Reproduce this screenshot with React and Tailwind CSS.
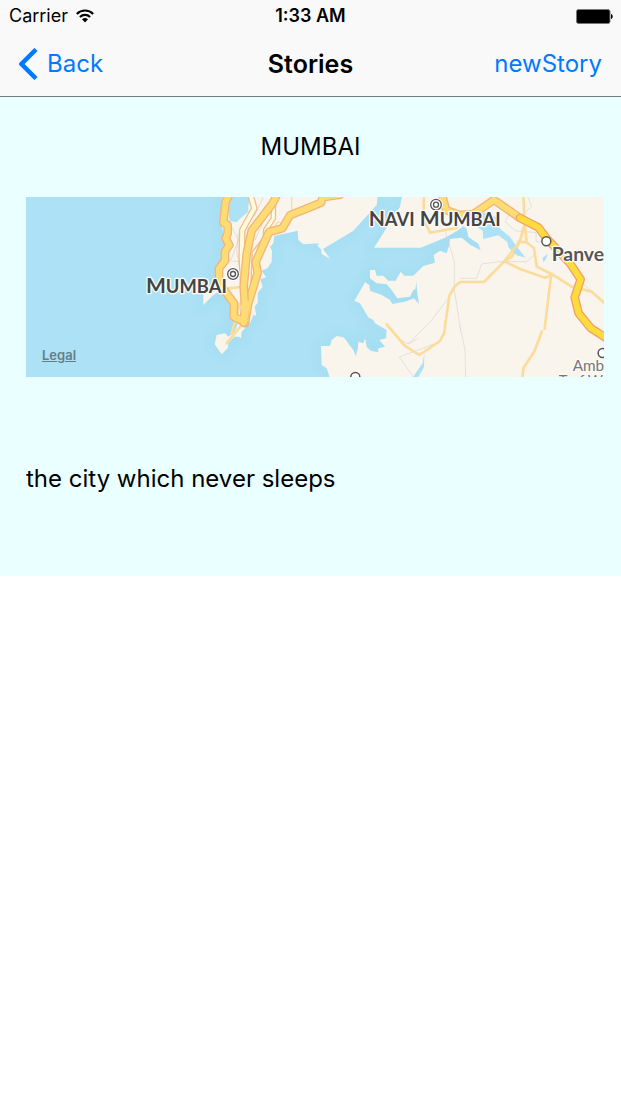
import React from "react";

const WATER = "#ade1f5";
const LAND = "#f9f5ed";

function Road({ d, width, fill, edge }) {
  return (
    <g fill="none" strokeLinejoin="round" strokeLinecap="round">
      {edge && <path d={d} stroke={edge} strokeWidth={width + 8} />}
      <path d={d} stroke={fill} strokeWidth={width} />
    </g>
  );
}

function Target({ cx, cy }) {
  return (
    <g fill="none" stroke="#555" strokeWidth="4">
      <circle cx={cx} cy={cy} r="19" fill="#fff" stroke="#fff" />
      <circle cx={cx} cy={cy} r="16" />
      <circle cx={cx} cy={cy} r="7.5" />
    </g>
  );
}

function Town({ cx, cy }) {
  return <circle cx={cx} cy={cy} r="13.5" fill="#fff" stroke="#555" strokeWidth="4.5" />;
}

function MapLabel({ children, ...props }) {
  return (
    <text
      fill="#444"
      stroke="#fdfbf7"
      strokeWidth="8"
      strokeLinejoin="round"
      paintOrder="stroke"
      fontFamily="Lato, 'Open Sans', sans-serif"
      fontWeight="700"
      {...props}
    >
      {children}
    </text>
  );
}

function CityMap() {
  return (
    <svg
      className="block h-full w-full"
      viewBox="0 0 1734 540"
      preserveAspectRatio="xMidYMid slice"
      role="img"
      aria-label="Map of Mumbai"
    >
      <defs>
        <filter id="shore" x="-10%" y="-10%" width="120%" height="120%">
          <feGaussianBlur stdDeviation="16" />
        </filter>
        <path
          id="peninsula"
          d="M85 0L75 80 80 110 92 150 80 215 66 240 65 270 48 285 25 310V345L55 315 75 302 105 345V385L128 402 118 426 100 440 90 430 65 435 59 463 80 493 98 475 100 460 118 440 132 440 138 445 140 425 165 400 175 375 184 377 179 350 188 338 188 310 203 290 196 268 213 262 200 242 217 235 230 215 231 182 225 170 235 160 238 138 308 122 310 150 325 163 370 160 376 172 383 178 475 122 545 45 550 0Z"
        />
        <path
          id="mainland"
          d="M280 0L270 50 192 173H332L405 143 442 122 460 108 470 116 475 141 505 161 512 181 480 164 455 143 440 145 420 147 418 165 410 190 390 182 371 195 375 218 340 228 310 257H283L272 245 257 272H235L220 257H200L195 240H180V265L200 280 230 283 245 300 262 325 300 320 310 300 316 298 319 275 322 310 327 343 312 325 285 335 247 342 240 330 215 315 180 302 178 285 165 277 155 295 133 333 150 340 175 382 190 390 195 400 230 420 228 445 208 450 225 470 205 475V487L182 482 170 470 165 445 160 460 145 455 143 480 137 498 130 480 118 465 108 450 100 442 80 438 65 450 60 468H33L35 525 50 535 65 580H1000V0Z"
        />
      </defs>
      <rect width="1734" height="540" fill={WATER} />

      <g fill="none" stroke="#8fd4ea" strokeWidth="22" opacity="0.35" filter="url(#shore)">
        <use href="#peninsula" transform="translate(507 -21)" />
        <use href="#mainland" transform="translate(852 -21)" />
      </g>
      <g fill={LAND}>
        <use href="#peninsula" transform="translate(507 -21)" />
        <use href="#mainland" transform="translate(852 -21)" />
      </g>

      <g transform="translate(507 -21)">
        <path d="M115 0L100 60 104 93 125 97 140 82 160 65V48L168 0Z" fill={WATER} />
        <path d="M378 160L386 180 405 206 380 192 378 178 366 166Z" fill={LAND} />
        <path
          d="M105 100L130 150 110 205 75 225M130 130L125 185 135 240M205 20L178 80M215 70L180 150M90 210L130 215"
          fill="none"
          stroke="#d5d1cc"
          strokeWidth="2"
        />
        <Road d="M290 15V62L272 100M240 105L250 96 262 102" width={4} fill="#fbdc9b" />
        <Road d="M100 295L150 290M95 460L140 405M110 430L135 340" width={8} fill="#fbdc9b" />
        <Road d="M165 10L178 55 142 120 140 200 145 290" width={12} fill="#fffbe0" edge="#f3bd85" />
        <Road d="M235 50L235 85 212 120 212 145 178 188 174 290" width={9} fill="#fffbe0" edge="#f3bd85" />
        <Road
          d="M105 10L92 35 85 98 98 105V130L92 145 103 165 90 185V212L72 235V270L86 298 117 340 116 380 145 395"
          width={18}
          fill="#fddc74"
          edge="#f2b47a"
        />
        <Road
          d="M435 14L383 22 378 38 285 76 262 115 222 126 182 216 188 248 160 340 150 400"
          width={18}
          fill="#fddc74"
          edge="#f2b47a"
        />
        <Road
          d="M250 5L233 40 170 122 155 192 146 290 150 350 146 398"
          width={18}
          fill="#fddc74"
          edge="#f2b47a"
        />
        <Road d="M155 340L148 392 126 386M147 350L149 392" width={18} fill="#fddc74" />
      </g>

      <g transform="translate(852 -21)">
        <path
          d="M405 120L433 215V300L452 420M415 325L365 390 295 462 275 452M295 462L322 446M385 457L268 501 310 561"
          fill="none"
          stroke="#d8d4cd"
          strokeWidth="2"
        />
        <path d="M343 490L338 520 305 566H322L342 532Z" fill={WATER} />
        <Road
          d="M230 403L284 467 328 495 390 453 402 430 418 318 432 292 450 276 522 276 583 214 606 200 630 153 642 108"
          width={8}
          fill="#fbdc9b"
        />
        <Road d="M342 15L340 85 360 128 440 114 432 95" width={8} fill="#fbdc9b" />
      </g>

      <g transform="translate(1302 -21)">
        <path
          d="M30 70L85 68 112 84 120 116 150 140 170 170 197 203 170 196 145 172 142 156 115 136 70 147 68 122 35 100ZM248 203L263 192 258 208 250 217Z"
          fill={WATER}
        />
        <path
          d="M203 20L215 50 180 78M160 50L135 95 165 122 190 125M200 125L228 128V155L260 155M0 265H50L65 222 120 215H200L222 195M350 260L395 305M0 410L15 480 17 561"
          fill="none"
          stroke="#dad6d0"
          strokeWidth="2"
        />
        <Road
          d="M190 15L194 105 180 153 133 214 180 237 255 263 275 255M194 100L200 157 175 155M200 157L222 175 230 230 275 252 335 290 395 305 440 345M273 257L254 416M246 424L224 482 190 535 187 565"
          width={8}
          fill="#fbdc9b"
        />
        <Road
          d="M-55 10L-42 60 0 75 40 72 102 30 180 84"
          width={18}
          fill="#fddc74"
          edge="#f2b47a"
        />
        <Road
          d="M180 84L235 112 260 145 330 220 362 268 344 322 356 370 392 414 445 448"
          width={18}
          fill="#fedc3c"
          edge="#f2a16c"
        />
      </g>

      <Target cx="621" cy="231" />
      <Target cx="1230" cy="23" />
      <Town cx="1561" cy="133" />
      <Town cx="988" cy="540" />
      <Town cx="1730" cy="468" />

      <MapLabel x="360" y="288" fontSize="63">
        M<tspan fontSize="55">UMBAI</tspan>
      </MapLabel>
      <MapLabel x="1028" y="88" fontSize="63">
        N<tspan fontSize="55">AVI</tspan> M<tspan fontSize="55">UMBAI</tspan>
      </MapLabel>
      <MapLabel x="1577" y="193" fontSize="58" fill="#555">
        Panve
      </MapLabel>
      <MapLabel x="1640" y="521" fontSize="46" fill="#777" fontWeight="400">
        Amb
      </MapLabel>
      <MapLabel x="1598" y="566" fontSize="44" fill="#777" fontWeight="400">
        Turf W
      </MapLabel>
    </svg>
  );
}

function StatusBar() {
  return (
    <div className="grid h-8 grid-cols-3 items-center px-2 text-[18px] leading-6">
      <div className="flex items-center gap-2 pl-px">
        <span>Carrier</span>
        <svg className="h-[14px] w-[18px]" viewBox="0 0 18 14" aria-label="Wi-Fi">
          <g fill="none" stroke="#000" strokeWidth="2.1">
            <path d="M.8 4.9C5.3.4 12.7.4 17.2 4.9" />
            <path d="M3.9 8C6.7 5.2 11.3 5.2 14.1 8" />
          </g>
          <path d="M6 10.3C7.7 8.7 10.3 8.7 12 10.3L9 13.4Z" />
        </svg>
      </div>
      <span className="text-center font-semibold">1:33 AM</span>
      <svg className="h-[15px] w-[37px] justify-self-end" viewBox="0 0 37 15" aria-label="Battery full">
        <rect x=".5" y=".5" width="33.5" height="14" rx="2" fill="#000" stroke="#777" />
        <path d="M35 5C37.3 5.5 37.3 9.5 35 10Z" />
      </svg>
    </div>
  );
}

function NavBar() {
  return (
    <nav className="grid h-16 grid-cols-3 items-center px-[19px] text-[24px] leading-8">
      <button type="button" className="flex items-center gap-2 justify-self-start text-[#007aff]">
        <svg className="h-8 w-5" viewBox="0 0 20 32" fill="none" stroke="currentColor" strokeWidth="4.5" aria-hidden="true">
          <path d="M17 1.5L2.5 16L17 30.5" />
        </svg>
        Back
      </button>
      <h1 className="text-center text-[25px] font-semibold">Stories</h1>
      <button type="button" className="justify-self-end text-[#007aff]">
        newStory
      </button>
    </nav>
  );
}

export default function App() {
  return (
    <div className="min-h-screen bg-white font-['Inter',sans-serif] text-black">
      <header className="border-b border-[#74797c] bg-[#f9f9f9]">
        <StatusBar />
        <NavBar />
      </header>
      <main className="bg-[#eaffff] pt-[34px] pr-[17px] pb-[81px] pl-[26px] text-[24px] leading-8">
        <h2 className="mr-[9px] text-center">MUMBAI</h2>
        <div className="relative mt-[34px] h-[180px] overflow-hidden">
          <CityMap />
          <a
            href="#legal"
            className="absolute bottom-3 left-4 text-[13px] leading-5 font-semibold text-[#647f8a] underline"
          >
            Legal
          </a>
        </div>
        <p className="mt-[86px]">the city which never sleeps</p>
      </main>
    </div>
  );
}
